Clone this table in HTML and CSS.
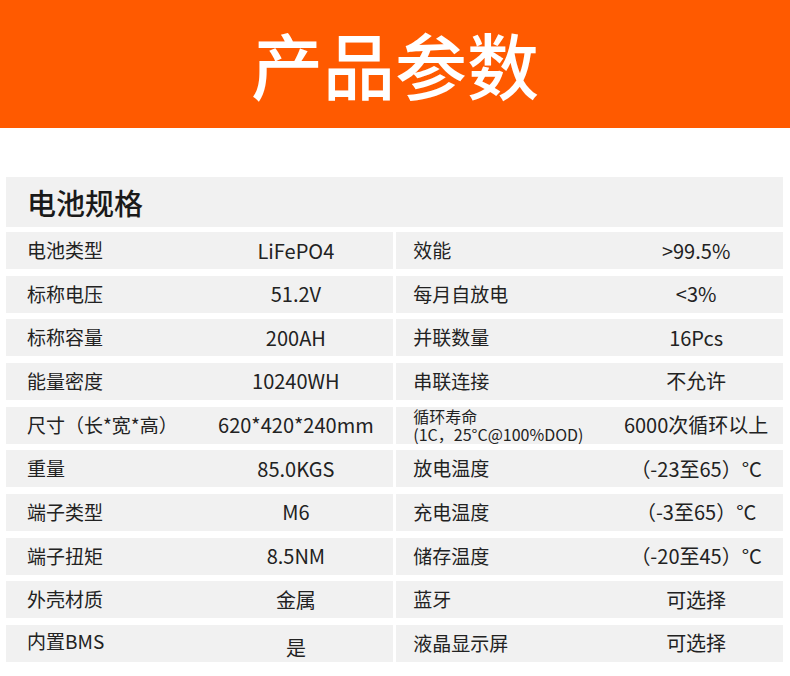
FILE: index.html
```html
<!DOCTYPE html>
<html lang="zh">
<head>
<meta charset="utf-8">
<title>产品参数</title>
<link rel="stylesheet" href="styles.css">
</head>
<body>
<header class="banner"><h1 class="banner-title">产品参数</h1></header>
<section class="spec">
  <h2 class="spec-head">电池规格</h2>
  <div class="spec-grid">
    <div class="cell left"><span class="label">电池类型</span><span class="value">LiFePO4</span></div>
    <div class="cell right"><span class="label">效能</span><span class="value">&gt;99.5%</span></div>

    <div class="cell left"><span class="label">标称电压</span><span class="value">51.2V</span></div>
    <div class="cell right"><span class="label">每月自放电</span><span class="value">&lt;3%</span></div>

    <div class="cell left"><span class="label">标称容量</span><span class="value">200AH</span></div>
    <div class="cell right"><span class="label">并联数量</span><span class="value">16Pcs</span></div>

    <div class="cell left"><span class="label">能量密度</span><span class="value">10240WH</span></div>
    <div class="cell right"><span class="label">串联连接</span><span class="value">不允许</span></div>

    <div class="cell left"><span class="label">尺寸（长*宽*高）</span><span class="value">620*420*240mm</span></div>
    <div class="cell right"><span class="label small"><span class="line">循环寿命</span><span class="line">(1C，25°C@100%DOD)</span></span><span class="value">6000次循环以上</span></div>

    <div class="cell left"><span class="label">重量</span><span class="value">85.0KGS</span></div>
    <div class="cell right"><span class="label">放电温度</span><span class="value">（-23至65）°C</span></div>

    <div class="cell left"><span class="label">端子类型</span><span class="value">M6</span></div>
    <div class="cell right"><span class="label">充电温度</span><span class="value">（-3至65）°C</span></div>

    <div class="cell left"><span class="label">端子扭矩</span><span class="value">8.5NM</span></div>
    <div class="cell right"><span class="label">储存温度</span><span class="value">（-20至45）°C</span></div>

    <div class="cell left"><span class="label">外壳材质</span><span class="value">金属</span></div>
    <div class="cell right"><span class="label">蓝牙</span><span class="value">可选择</span></div>

    <div class="cell left"><span class="label up">内置BMS</span><span class="value low">是</span></div>
    <div class="cell right"><span class="label">液晶显示屏</span><span class="value">可选择</span></div>
  </div>
</section>
</body>
</html>
```
FILE: styles.css
```css
html, body {
  margin: 0;
  padding: 0;
  background: #ffffff;
}
body {
  font-family: "Noto Sans CJK SC", "Noto Sans", sans-serif;
  color: #222222;
}
.banner {
  height: 128px;
  background: #ff5a00;
  display: flex;
  align-items: center;
  justify-content: center;
}
.banner-title {
  margin: 0;
  color: #ffffff;
  font-size: 72px;
  font-weight: 500;
  line-height: 1;
  letter-spacing: 0;
  padding-bottom: 2px;
}
.spec {
  padding: 49px 7px 0 6px;
}
.spec-head {
  margin: 0 0 5px 0;
  height: 50px;
  background: #f1f1f1;
  display: flex;
  align-items: center;
  padding-left: 21px;
  font-size: 29px;
  font-weight: 500;
  color: #1a1a1a;
  box-sizing: border-box;
}
.spec-grid {
  display: grid;
  grid-template-columns: 1fr 1fr;
  column-gap: 3.5px;
  row-gap: 6.67px;
}
.cell {
  height: 37px;
  background: #f1f1f1;
  display: grid;
  align-items: center;
  font-size: 19px;
  line-height: 1.2;
}
.cell.left {
  grid-template-columns: 193px 1fr;
}
.cell.right {
  grid-template-columns: 213px 1fr;
}
.label {
  padding-left: 21px;
  white-space: nowrap;
}
.label.up {
  padding-bottom: 4px;
}
.cell.right .label {
  padding-left: 17px;
}
.label.small {
  display: flex;
  flex-direction: column;
  font-size: 16px;
  line-height: 18px;
}
.line {
  display: block;
  height: 18px;
}
.value {
  text-align: center;
  white-space: nowrap;
  font-size: 20px;
}
.value.low {
  padding-top: 9px;
}
```
